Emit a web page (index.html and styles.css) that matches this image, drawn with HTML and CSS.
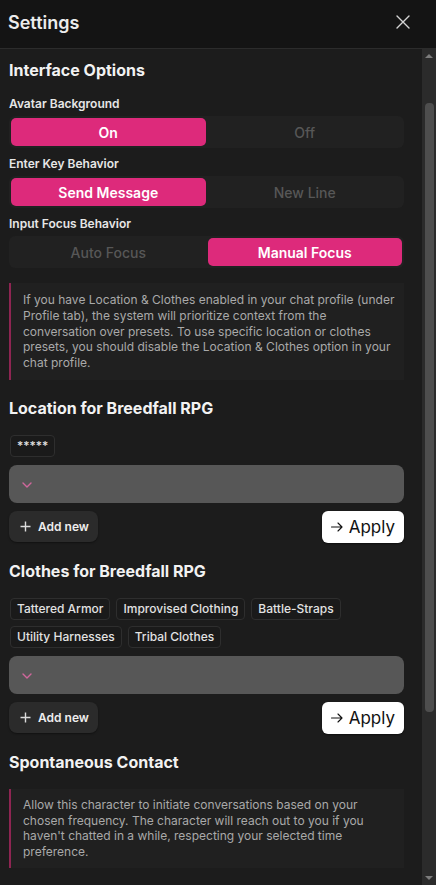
FILE: index.html
```html
<!DOCTYPE html>
<html lang="en">
<head>
<meta charset="utf-8">
<title>Settings</title>
<link rel="stylesheet" href="styles.css">
</head>
<body>
<div class="app">
  <header class="topbar">
    <h1 class="title">Settings</h1>
    <button class="close" aria-label="Close">
      <svg width="14" height="14" viewBox="0 0 14 14"><path d="M1 1L13 13M13 1L1 13" stroke="#d4d4d4" stroke-width="1.4" stroke-linecap="round" fill="none"/></svg>
    </button>
  </header>
  <div class="body">
    <main class="content">
      <h2 class="heading first">Interface Options</h2>

      <div class="label">Avatar Background</div>
      <div class="toggle">
        <button class="opt active">On</button>
        <button class="opt">Off</button>
      </div>

      <div class="label">Enter Key Behavior</div>
      <div class="toggle">
        <button class="opt active">Send Message</button>
        <button class="opt">New Line</button>
      </div>

      <div class="label">Input Focus Behavior</div>
      <div class="toggle">
        <button class="opt">Auto Focus</button>
        <button class="opt active">Manual Focus</button>
      </div>

      <div class="note note-first">If you have Location &amp; Clothes enabled in your chat profile (under Profile tab), the system will prioritize context from the conversation over presets. To use specific location or clothes presets, you should disable the Location &amp; Clothes option in your chat profile.</div>

      <h2 class="heading">Location for Breedfall RPG</h2>
      <div class="tags">
        <span class="tag">*****</span>
      </div>
      <div class="select">
        <svg width="10" height="6" viewBox="0 0 10 6"><path d="M1 1L5 5L9 1" stroke="#d0679c" stroke-width="1.4" fill="none" stroke-linecap="round" stroke-linejoin="round"/></svg>
      </div>
      <div class="actions">
        <button class="add">
          <svg width="11" height="11" viewBox="0 0 11 11"><path d="M5.5 0.5V10.5M0.5 5.5H10.5" stroke="#dcdcdc" stroke-width="1.4" fill="none"/></svg>
          Add new
        </button>
        <button class="apply">
          <svg class="arrow" width="12" height="10" viewBox="0 0 12 10"><path d="M0.5 5H11M7 1L11 5L7 9" stroke="#111" stroke-width="1.1" fill="none" stroke-linecap="round" stroke-linejoin="round"/></svg>
          Apply
        </button>
      </div>

      <h2 class="heading">Clothes for Breedfall RPG</h2>
      <div class="tags">
        <span class="tag">Tattered Armor</span>
        <span class="tag">Improvised Clothing</span>
        <span class="tag">Battle-Straps</span>
        <span class="tag">Utility Harnesses</span>
        <span class="tag">Tribal Clothes</span>
      </div>
      <div class="select">
        <svg width="10" height="6" viewBox="0 0 10 6"><path d="M1 1L5 5L9 1" stroke="#d0679c" stroke-width="1.4" fill="none" stroke-linecap="round" stroke-linejoin="round"/></svg>
      </div>
      <div class="actions">
        <button class="add">
          <svg width="11" height="11" viewBox="0 0 11 11"><path d="M5.5 0.5V10.5M0.5 5.5H10.5" stroke="#dcdcdc" stroke-width="1.4" fill="none"/></svg>
          Add new
        </button>
        <button class="apply">
          <svg class="arrow" width="12" height="10" viewBox="0 0 12 10"><path d="M0.5 5H11M7 1L11 5L7 9" stroke="#111" stroke-width="1.1" fill="none" stroke-linecap="round" stroke-linejoin="round"/></svg>
          Apply
        </button>
      </div>

      <h2 class="heading">Spontaneous Contact</h2>
      <div class="note">Allow this character to initiate conversations based on your chosen frequency. The character will reach out to you if you haven't chatted in a while, respecting your selected time preference.</div>
    </main>
    <div class="scrollbar">
      <div class="sb-btn"><span class="tri up"></span></div>
      <div class="sb-track"><div class="sb-thumb"></div></div>
      <div class="sb-btn"><span class="tri down"></span></div>
    </div>
  </div>
</div>
</body>
</html>
```
FILE: styles.css
```css
* { box-sizing: border-box; }
html, body { margin: 0; padding: 0; }
body {
  background: #1c1c1c;
  font-family: Inter, "Noto Sans", "Liberation Sans", sans-serif;
  color: #ececec;
  width: 436px;
  height: 885px;
  overflow: hidden;
}
button {
  font-family: inherit;
  border: none;
  cursor: pointer;
}
.app {
  height: 885px;
  display: flex;
  flex-direction: column;
}
.topbar {
  height: 49px;
  flex: none;
  background: #141414;
  border-bottom: 1px solid #2c2c2c;
  display: flex;
  align-items: center;
  justify-content: space-between;
  padding: 0 26px 4px 8px;
}
.title {
  margin: 0;
  font-size: 18px;
  font-weight: 600;
  color: #ececec;
}
.close {
  background: none;
  padding: 0;
  width: 14px;
  height: 14px;
  display: flex;
}
.body {
  flex: 1;
  display: flex;
  min-height: 0;
}
.content {
  flex: 1;
  min-width: 0;
  overflow: hidden;
  padding: 9px 18px 0 9px;
  display: flex;
  flex-direction: column;
}
.heading {
  margin: 16px 0 15px;
  font-size: 16px;
  line-height: 24px;
  font-weight: 700;
  color: #f2f2f2;
}
.heading.first { margin: 0 0 14px; }
.label {
  font-size: 12px;
  font-weight: 600;
  line-height: 16px;
  color: #e6e6e6;
  margin-bottom: 4px;
}
.toggle {
  display: flex;
  gap: 2px;
  padding: 2px;
  background: #212121;
  border-radius: 6px;
  height: 32px;
  margin-bottom: 8px;
}
.opt {
  flex: 1;
  border-radius: 5px;
  background: transparent;
  color: #575757;
  font-size: 14px;
  font-weight: 500;
}
.opt.active {
  background: #dd2a7b;
  color: #ffffff;
  font-weight: 600;
}
.note {
  background: #202020;
  border-left: 2px solid #8e2552;
  padding: 8px 6px 8px 12px;
  font-size: 12px;
  line-height: 15.75px;
  color: #a9a9a9;
}
.note-first {
  margin-top: 7px;
  padding-top: 9px;
  padding-bottom: 9px;
}
.tags {
  display: flex;
  flex-wrap: wrap;
  gap: 6px;
  padding-left: 1px;
  margin-bottom: 8px;
}
.tag {
  border: 1px solid #2e2e2e;
  background: #1a1a1a;
  border-radius: 4px;
  padding: 2px 6px;
  font-size: 12px;
  line-height: 16px;
  font-weight: 500;
  color: #e2e2e2;
}
.select {
  height: 38px;
  background: #575757;
  border-radius: 8px;
  display: flex;
  align-items: center;
  padding-left: 13px;
  padding-top: 2px;
  margin-bottom: 8px;
}
.actions {
  display: flex;
  justify-content: space-between;
  align-items: center;
}
.add {
  height: 31px;
  display: flex;
  align-items: center;
  gap: 7px;
  padding: 0 9px 0 11px;
  background: #2b2b2b;
  border-radius: 8px;
  color: #ededed;
  font-size: 12px;
  font-weight: 600;
  box-shadow: 0 1px 2px rgba(0,0,0,0.4);
}
.apply {
  height: 32px;
  padding: 0 9px;
  background: #ffffff;
  color: #111111;
  border-radius: 6px;
  font-size: 17px;
  font-weight: 400;
  display: flex;
  align-items: center;
  gap: 6px;
  box-shadow: 0 1px 2px rgba(0,0,0,0.5);
}
.arrow { flex: none; }
.scrollbar {
  width: 14px;
  flex: none;
  background: #2b2b2b;
  display: flex;
  flex-direction: column;
}
.sb-btn {
  height: 14px;
  flex: none;
  display: flex;
  align-items: center;
  justify-content: center;
}
.tri {
  width: 0;
  height: 0;
  border-left: 4px solid transparent;
  border-right: 4px solid transparent;
}
.tri.up { border-bottom: 4px solid #7c7c7c; }
.tri.down { border-top: 4px solid #7c7c7c; }
.sb-track {
  flex: 1;
  display: flex;
  justify-content: center;
}
.sb-thumb {
  width: 9px;
  height: 609px;
  margin-top: 40px;
  background: #4e4e4e;
  border-radius: 4px;
}
```
